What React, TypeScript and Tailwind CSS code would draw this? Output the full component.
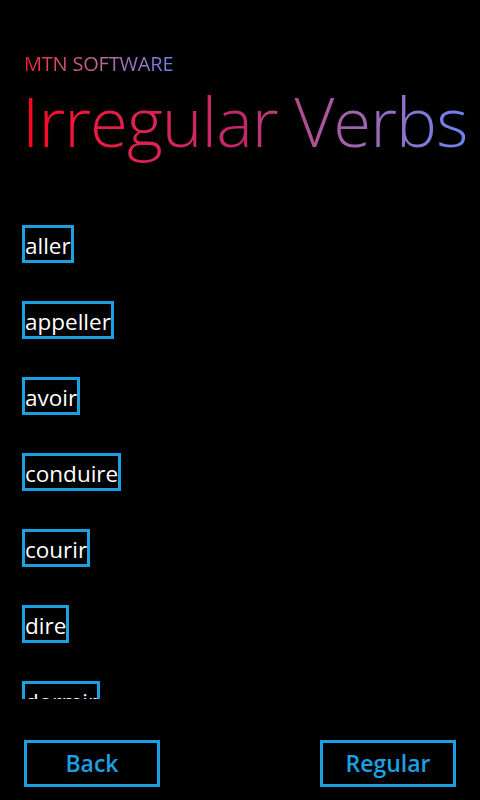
const verbs = ['aller', 'appeller', 'avoir', 'conduire', 'courir', 'dire', 'dormir', 'écrire', 'être'];

export default function App() {
    return (
        <div className="flex h-[800px] w-[480px] flex-col overflow-hidden bg-black" style={{ fontFamily: '"Open Sans", "Noto Sans", sans-serif' }}>
            <div className="pl-6 pt-[52px]">
                <p className="inline-block bg-gradient-to-r from-[#f0102a] to-[#6b80f0] bg-clip-text text-[20px] leading-6 tracking-[-0.2px] text-transparent">
                    MTN SOFTWARE
                </p>
            </div>
            <div className="pl-[22px]">
                <h1 className="inline-block bg-gradient-to-r from-[#ff0010] via-[#c0286c] to-[#6a84f0] bg-clip-text text-[69px] font-light leading-[86px] tracking-[-1px] text-transparent">
                    Irregular Verbs
                </h1>
            </div>
            <div className="mt-[62px] h-[474px] overflow-hidden pl-[22px]">
                <ul className="flex flex-col gap-[38px]">
                    {verbs.map((verb) => (
                        <li key={verb}>
                            <span className="inline-block h-[38px] border-[3px] border-[#1ba1e2] text-[22.5px] leading-[36px] text-white">
                                {verb}
                            </span>
                        </li>
                    ))}
                </ul>
            </div>
            <div className="mt-[41px] flex justify-between px-6">
                <button className="h-[47px] w-[136px] border-[3px] border-[#1ba1e2] text-[23px] font-semibold text-[#1ba1e2]">Back</button>
                <button className="h-[47px] w-[136px] border-[3px] border-[#1ba1e2] text-[23px] font-semibold text-[#1ba1e2]">Regular</button>
            </div>
        </div>
    );
}
